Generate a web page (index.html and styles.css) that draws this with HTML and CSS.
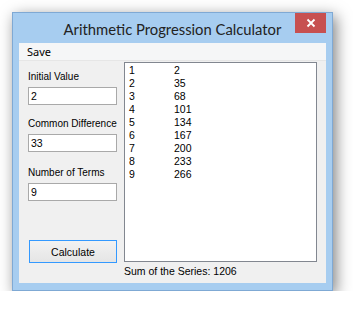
FILE: index.html
```html
<!DOCTYPE html>
<html lang="en">
<head>
  <meta charset="UTF-8">
  <title>Arithmetic Progression Calculator</title>
  <link rel="stylesheet" href="styles.css">
</head>
<body>
  <div class="window">
    <div class="titlebar">
      <span class="title">Arithmetic Progression Calculator</span>
      <button class="close-button">
        <svg width="10" height="10" viewBox="0 0 10 10">
          <path d="M1.5 1.5 L8.5 8.5 M8.5 1.5 L1.5 8.5" stroke="#fff" stroke-width="1.8" fill="none"/>
        </svg>
      </button>
    </div>

    <div class="client">
      <div class="menubar">
        <span class="menu-item">Save</span>
      </div>

      <div class="content">
        <div class="inputs">
          <div class="field">
            <div class="field-label">Initial Value</div>
            <div class="textbox">2</div>
          </div>
          <div class="field">
            <div class="field-label">Common Difference</div>
            <div class="textbox">33</div>
          </div>
          <div class="field">
            <div class="field-label">Number of Terms</div>
            <div class="textbox">9</div>
          </div>
          <button class="calc-button">Calculate</button>
        </div>

        <div class="results">
          <div class="listbox">
            <div class="list-row"><span>1</span><span>2</span></div>
            <div class="list-row"><span>2</span><span>35</span></div>
            <div class="list-row"><span>3</span><span>68</span></div>
            <div class="list-row"><span>4</span><span>101</span></div>
            <div class="list-row"><span>5</span><span>134</span></div>
            <div class="list-row"><span>6</span><span>167</span></div>
            <div class="list-row"><span>7</span><span>200</span></div>
            <div class="list-row"><span>8</span><span>233</span></div>
            <div class="list-row"><span>9</span><span>266</span></div>
          </div>
          <div class="sum">Sum of the Series: 1206</div>
        </div>
      </div>
    </div>
  </div>
</body>
</html>
```

FILE: styles.css
```css
body {
  margin: 0;
  padding: 12px 0 0 12px;
  background: #fff;
  font-family: 'Liberation Sans', Arial, sans-serif;
  font-size: 10.5px;
  color: #000;
}

.window {
  box-sizing: border-box;
  width: 321px;
  height: 279px;
  border: 1px solid #7fa9d4;
  background: #a7cdf0;
  box-shadow: 3px 4px 14px rgba(0, 0, 0, 0.5);
}

.titlebar {
  height: 30px;
  display: grid;
  grid-template-columns: 1fr auto 1fr;
}

.title {
  grid-column: 2;
  align-self: center;
  font-family: Lato, sans-serif;
  font-size: 14.8px;
  color: #222;
  white-space: nowrap;
  margin-top: 1px;
}

.close-button {
  grid-column: 3;
  justify-self: end;
  align-self: start;
  width: 31px;
  height: 20px;
  margin-right: 6px;
  padding: 0;
  border: none;
  background: #c75050;
  display: flex;
  align-items: center;
  justify-content: center;
}

.client {
  height: 240px;
  margin: 0 6px;
  background: #f0f0f0;
}

.menubar {
  box-sizing: border-box;
  height: 18px;
  padding-left: 8px;
  background: #f5f6f7;
  border-bottom: 1px solid #e6e6e6;
  font-family: 'Noto Sans', sans-serif;
  font-size: 11px;
  line-height: 17px;
}

.content {
  display: flex;
}

.inputs {
  box-sizing: border-box;
  width: 105px;
  padding: 9px 0 0 9px;
  display: flex;
  flex-direction: column;
}

.field {
  margin-bottom: 12px;
}

.field + .field {
  margin-bottom: 14px;
}

.field:nth-child(3) {
  margin-bottom: 0;
}

.field-label {
  font-size: 10px;
  line-height: 13px;
  margin-bottom: 4px;
  white-space: nowrap;
}

.textbox {
  box-sizing: border-box;
  width: 89px;
  height: 18px;
  border: 1px solid #a9a9a9;
  background: #fff;
  padding-left: 2px;
  line-height: 16px;
}

.calc-button {
  box-sizing: border-box;
  width: 88px;
  height: 23px;
  margin: 39px 0 0 1px;
  border: 1px solid #3399ff;
  background: linear-gradient(#f2f2f2, #e5e5e5);
  font-family: 'Liberation Sans', Arial, sans-serif;
  font-size: 10.5px;
  color: #000;
  padding: 0;
}

.results {
  width: 193px;
  padding-top: 1px;
}

.listbox {
  box-sizing: border-box;
  height: 200px;
  border: 1px solid #828790;
  background: #fff;
  padding: 1px 0 0 4px;
}

.list-row {
  display: grid;
  grid-template-columns: 45px 1fr;
  height: 13px;
  line-height: 13px;
}

.sum {
  margin-top: 3px;
  line-height: 13px;
}
```
